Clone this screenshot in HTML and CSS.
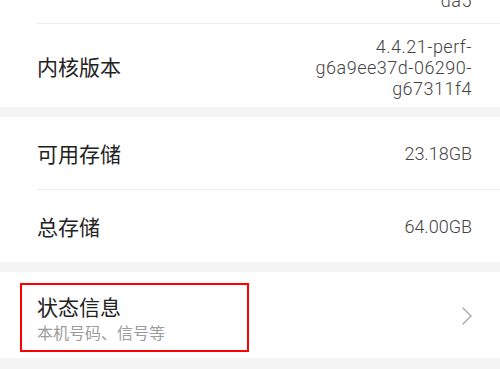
FILE: index.html
```html
<!DOCTYPE html>
<html lang="zh-CN">
<head>
<meta charset="utf-8">
<title>关于手机</title>
<link rel="stylesheet" href="styles.css">
</head>
<body>
<div class="page">
  <section class="group">
    <div class="row row-cut">
      <div class="row-inner divided">
        <span class="label"></span>
        <span class="value value-cut">da5</span>
      </div>
    </div>
    <div class="row row-kernel">
      <div class="row-inner">
        <span class="label">内核版本</span>
        <span class="value value-multi">4.4.21-perf-<br>g6a9ee37d-06290-<br>g67311f4</span>
      </div>
    </div>
  </section>
  <section class="group">
    <div class="row row-std">
      <div class="row-inner divided">
        <span class="label">可用存储</span>
        <span class="value">23.18GB</span>
      </div>
    </div>
    <div class="row row-std">
      <div class="row-inner">
        <span class="label">总存储</span>
        <span class="value">64.00GB</span>
      </div>
    </div>
  </section>
  <section class="group">
    <div class="row row-status">
      <div class="highlight">
        <span class="title">状态信息</span>
        <span class="subtitle">本机号码、信号等</span>
      </div>
      <svg class="chevron" width="12" height="20" viewBox="0 0 12 20" aria-hidden="true">
        <polyline points="1.5,1.5 10,10 1.5,18.5" fill="none" stroke="#a8a8a8" stroke-width="1.4"/>
      </svg>
    </div>
  </section>
</div>
</body>
</html>
```

FILE: styles.css
```css
html, body {
  margin: 0;
  padding: 0;
}
body {
  width: 500px;
  height: 369px;
  overflow: hidden;
  background: #f4f4f4;
  font-family: Roboto, "Noto Sans CJK SC", sans-serif;
}
.page {
  display: flex;
  flex-direction: column;
  gap: 10px;
}
.group {
  background: #ffffff;
  display: flex;
  flex-direction: column;
}
.row {
  padding-left: 37px;
}
.row-inner {
  display: flex;
  align-items: center;
  justify-content: space-between;
  padding-right: 28px;
  box-sizing: border-box;
}
.divided {
  border-bottom: 1px solid #ececec;
}
.row-cut .row-inner {
  height: 24px;
  align-items: flex-start;
}
.row-kernel .row-inner {
  height: 83px;
}
.row-std .row-inner {
  height: 72px;
}
.row-std .divided {
  height: 73px;
}
.label {
  font-family: "Noto Sans CJK SC", sans-serif;
  font-size: 21px;
  color: #222222;
}
.value {
  font-family: Roboto, sans-serif;
  font-weight: 300;
  font-size: 18px;
  color: #444444;
  text-align: right;
}
.value-cut {
  line-height: 21px;
  margin-top: -10px;
  letter-spacing: 0.5px;
}
.value-multi {
  line-height: 20.8px;
  margin-top: 6px;
  letter-spacing: 0.5px;
}
.row-status {
  display: flex;
  align-items: center;
  justify-content: space-between;
  height: 86px;
  box-sizing: border-box;
  padding: 11px 27px 6px 20px;
}
.highlight {
  width: 229px;
  height: 69px;
  box-sizing: border-box;
  border: 2px solid #ff0000;
  padding-left: 15px;
  display: flex;
  flex-direction: column;
  justify-content: center;
  gap: 3px;
}
.title {
  font-family: "Noto Sans CJK SC", sans-serif;
  font-size: 21px;
  line-height: 26px;
  color: #222222;
}
.subtitle {
  font-family: "Noto Sans CJK SC", sans-serif;
  font-size: 16px;
  line-height: 20px;
  color: #9c9c9c;
}
.chevron {
  display: block;
  margin-top: -4px;
}
```
